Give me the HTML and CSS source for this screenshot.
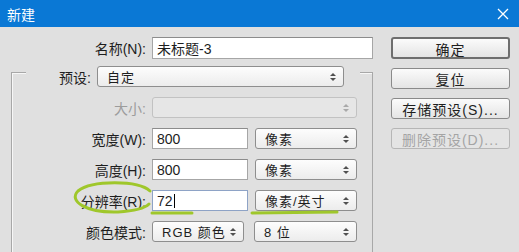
FILE: index.html
```html
<!DOCTYPE html>
<html lang="zh-CN">
<head>
    <meta charset="UTF-8">
    <title>新建</title>
    <link rel="stylesheet" href="styles.css">
</head>
<body>
    <div class="titlebar">
        <span class="title">新建</span>
        <svg class="close" width="12" height="12" viewBox="0 0 12 12">
            <path d="M1 1 L11 11 M11 1 L1 11" stroke="#fff" stroke-width="1.3" fill="none"/>
        </svg>
    </div>

    <div class="dialog">
        <div class="form">
            <div class="name-row">
                <label class="lbl">名称(N):</label>
                <div class="input name-input">未标题-3</div>
            </div>

            <div class="group">
                <div class="legend">
                    <label class="lbl">预设:</label>
                    <div class="select preset">自定<span class="arrows"></span></div>
                </div>

                <div class="rows">
                    <div class="row">
                        <label class="lbl disabled">大小:</label>
                        <div class="select size-select off"><span class="arrows"></span></div>
                    </div>
                    <div class="row">
                        <label class="lbl">宽度(W):</label>
                        <div class="input num">800</div>
                        <div class="select unit">像素<span class="arrows"></span></div>
                    </div>
                    <div class="row">
                        <label class="lbl">高度(H):</label>
                        <div class="input num">800</div>
                        <div class="select unit">像素<span class="arrows"></span></div>
                    </div>
                    <div class="row">
                        <label class="lbl">分辨率(R):</label>
                        <div class="input num focused">72<span class="caret"></span></div>
                        <div class="select unit">像素/英寸<span class="arrows"></span></div>
                    </div>
                    <div class="row">
                        <label class="lbl">颜色模式:</label>
                        <div class="select mode">RGB 颜色<span class="arrows"></span></div>
                        <div class="select depth">8 位<span class="arrows"></span></div>
                    </div>
                </div>
            </div>
        </div>

        <div class="buttons">
            <button class="btn default">确定</button>
            <button class="btn">复位</button>
            <button class="btn">存储预设(S)...</button>
            <button class="btn" disabled>删除预设(D)...</button>
        </div>
    </div>

    <!-- hand drawn marks on top of the screenshot -->
    <svg class="marks" width="519" height="252" viewBox="0 0 519 252">
        <path d="M150 191 C 138 180, 92 180, 78 191 C 68 201, 86 213, 118 212 C 134 211, 145 208, 149 204"
              stroke="#9fc72b" stroke-width="3" fill="none" stroke-linecap="round"/>
        <path d="M152 213 L192 213" stroke="#9fc72b" stroke-width="3" stroke-linecap="round"/>
        <path d="M252 213 L337 212" stroke="#9fc72b" stroke-width="3" stroke-linecap="round"/>
    </svg>
</body>
</html>
```

FILE: styles.css
```css
* {
    box-sizing: border-box;
}

body {
    margin: 0;
    width: 519px;
    height: 252px;
    overflow: hidden;
    background: #e0e0e0;
    font-family: "Liberation Sans", "Noto Sans CJK SC", sans-serif;
    font-size: 14px;
    color: #1e1e1e;
}

.titlebar {
    height: 27px;
    background: #0a78d5;
    display: flex;
    align-items: center;
    justify-content: space-between;
    padding: 0 10px 0 7px;
}
.title {
    color: #fff;
    font-size: 14px;
}

.dialog {
    display: flex;
    gap: 18px;
    padding: 10px 0 0 11px;
}

.form {
    width: 362px;
}

.lbl {
    text-align: right;
    white-space: nowrap;
}
.lbl.disabled {
    color: #9c9c9c;
}

.name-row {
    display: grid;
    grid-template-columns: 135px 221px;
    column-gap: 6px;
    align-items: center;
    height: 22px;
}

.input {
    height: 100%;
    background: #fff;
    border: 1px solid #a6a6a6;
    border-top-color: #8c8c8c;
    padding-left: 4px;
    display: flex;
    align-items: center;
}
.input.focused {
    border-color: #8ea3c6;
}
.caret {
    width: 1px;
    height: 14px;
    background: #000;
    margin-left: 1px;
}

.select {
    height: 100%;
    display: flex;
    align-items: center;
    padding-left: 9px;
    border: 1px solid #8e8e8e;
    border-radius: 3px;
    background: linear-gradient(#fdfdfd, #ececec);
    white-space: nowrap;
    font-size: 13px;
    letter-spacing: 1px;
}
.select.off {
    border-color: #c2c2c2;
    background: #e6e6e6;
}

/* tiny up/down spinner glyph */
.arrows {
    margin-left: auto;
    margin-right: 7px;
    display: flex;
    flex-direction: column;
    gap: 2px;
}
.arrows::before,
.arrows::after {
    content: "";
    width: 0;
    height: 0;
    border-left: 3px solid transparent;
    border-right: 3px solid transparent;
}
.arrows::before {
    border-bottom: 3px solid #505050;
}
.arrows::after {
    border-top: 3px solid #505050;
}
.off .arrows {
    opacity: 0.4;
}

.group {
    margin-top: 13px;
    height: 180px;
    border: 1px solid #a8a8a8;
    border-bottom: none;
    box-shadow: inset 1px 1px 0 #f7f7f7;
}

.legend {
    margin: -7px 0 0 14px;
    width: 334px;
    height: 20px;
    padding-right: 16px;
    background: #e0e0e0;
    display: grid;
    grid-template-columns: 65px 247px;
    column-gap: 6px;
    align-items: center;
}

.rows {
    margin-top: 11px;
    display: flex;
    flex-direction: column;
    gap: 10px;
}
.row {
    display: flex;
    align-items: center;
    height: 21px;
}
.row .lbl {
    width: 134px;
    margin-right: 6px;
}
.size-select {
    width: 205px;
}
.num {
    width: 96px;
}
.unit {
    width: 102px;
    margin-left: 7px;
}
.mode {
    width: 92px;
}
.depth {
    width: 103px;
    margin-left: 10px;
}

.buttons {
    width: 119px;
    display: flex;
    flex-direction: column;
    gap: 9px;
}
.btn {
    height: 21px;
    padding: 0;
    font: inherit;
    color: #1e1e1e;
    letter-spacing: 1px;
    border: 1px solid #8a8a8a;
    border-radius: 3px;
    background: linear-gradient(#fbfbfb, #e4e4e4);
}
.btn.default {
    height: 22px;
    border: 2px solid #6e6e6e;
}
.btn:disabled {
    color: #a4a4a4;
    border-color: #b6b6b6;
    background: #e4e4e4;
}

.marks {
    position: absolute;
    left: 0;
    top: 0;
    pointer-events: none;
}
```
